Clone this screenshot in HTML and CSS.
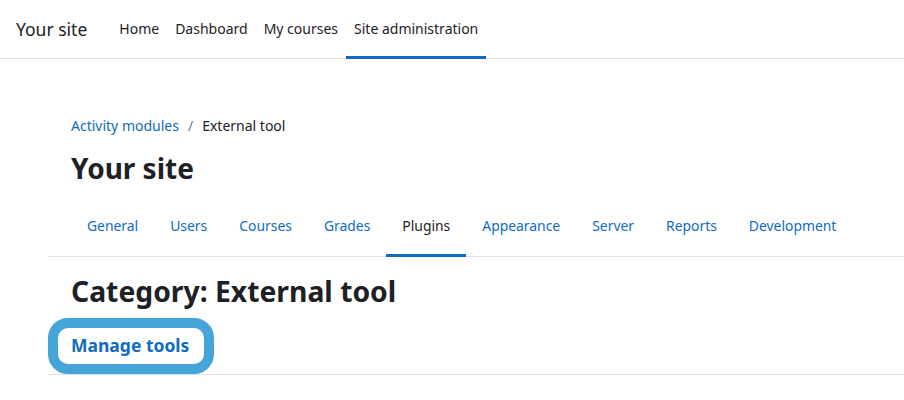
FILE: index.html
```html
<!DOCTYPE html>
<html>
<head>
<meta charset="utf-8">
<link rel="stylesheet" href="styles.css">
</head>
<body>
<header class="navbar">
  <div class="brand">Your site</div>
  <nav class="primary">
    <a class="pnav">Home</a>
    <a class="pnav">Dashboard</a>
    <a class="pnav">My courses</a>
    <a class="pnav active">Site administration</a>
  </nav>
</header>
<main class="page">
  <div class="inner">
    <div class="breadcrumb">
      <a class="crumb-link">Activity modules</a>
      <span class="sep">/</span>
      <span class="crumb">External tool</span>
    </div>
    <h1 class="title">Your site</h1>
  </div>
  <nav class="secondary">
    <a class="tab">General</a>
    <a class="tab">Users</a>
    <a class="tab">Courses</a>
    <a class="tab">Grades</a>
    <a class="tab active">Plugins</a>
    <a class="tab">Appearance</a>
    <a class="tab">Server</a>
    <a class="tab">Reports</a>
    <a class="tab">Development</a>
  </nav>
  <div class="inner">
    <h2 class="cat">Category: External tool</h2>
  </div>
  <div class="tools-row">
    <a class="manage">Manage tools</a>
  </div>
</main>
</body>
</html>
```
FILE: styles.css
```css
* { box-sizing: border-box; }
html, body { margin: 0; padding: 0; background: #fff; }
body {
  font-family: "Segoe UI", "Noto Sans", "Open Sans", sans-serif;
  color: #1d2125;
  font-size: 14px;
  overflow: hidden;
}
a { text-decoration: none; }

.navbar {
  height: 59px;
  border-bottom: 1px solid #dee2e6;
  display: flex;
  align-items: stretch;
  padding-left: 16px;
}
.brand {
  font-size: 17.5px;
  display: flex;
  align-items: center;
  padding-bottom: 1px;
  margin-right: 24px;
}
.primary { display: flex; align-items: stretch; }
.pnav {
  color: #1d2125;
  padding: 0 8px;
  display: flex;
  align-items: center;
  border-bottom: 3px solid transparent;
  margin-bottom: -1px;
  font-size: 14px;
}
.pnav.active { border-bottom-color: #0f6cbf; }

.page { margin-left: 48px; }
.inner { padding-left: 23px; }
.breadcrumb {
  padding-top: 57px;
  font-size: 14px;
  height: 91px;
  display: flex;
  align-items: flex-start;
}
.crumb-link { color: #0f6cbf; }
.sep { color: #6a737b; padding: 0 9px; }
.crumb { color: #1d2125; }
.title {
  margin: 0;
  font-size: 28px;
  font-weight: 700;
  line-height: 36px;
  height: 45px;
}
.secondary {
  display: flex;
  padding-left: 23px;
  border-bottom: 1px solid #dee2e6;
  height: 62px;
  align-items: stretch;
}
.tab {
  color: #0f6cbf;
  padding: 2px 16px 0;
  display: flex;
  align-items: center;
  border-bottom: 3px solid transparent;
  margin-bottom: -1px;
  font-size: 13.9px;
}
.tab.active { color: #1d2125; border-bottom-color: #0f6cbf; }

.cat {
  margin: 0;
  font-size: 28.3px;
  font-weight: 700;
  line-height: 36px;
  padding-top: 16px;
  height: 61px;
}
.tools-row {
  border-bottom: 1px solid #dee2e6;
  height: 57px;
}
.manage {
  display: inline-block;
  border: 10px solid #45a5d8;
  border-radius: 20px;
  color: #0f6cbf;
  font-weight: 700;
  font-size: 17.5px;
  line-height: 35px;
  height: 56px;
  padding: 0 15px 0 13px;
}
```
